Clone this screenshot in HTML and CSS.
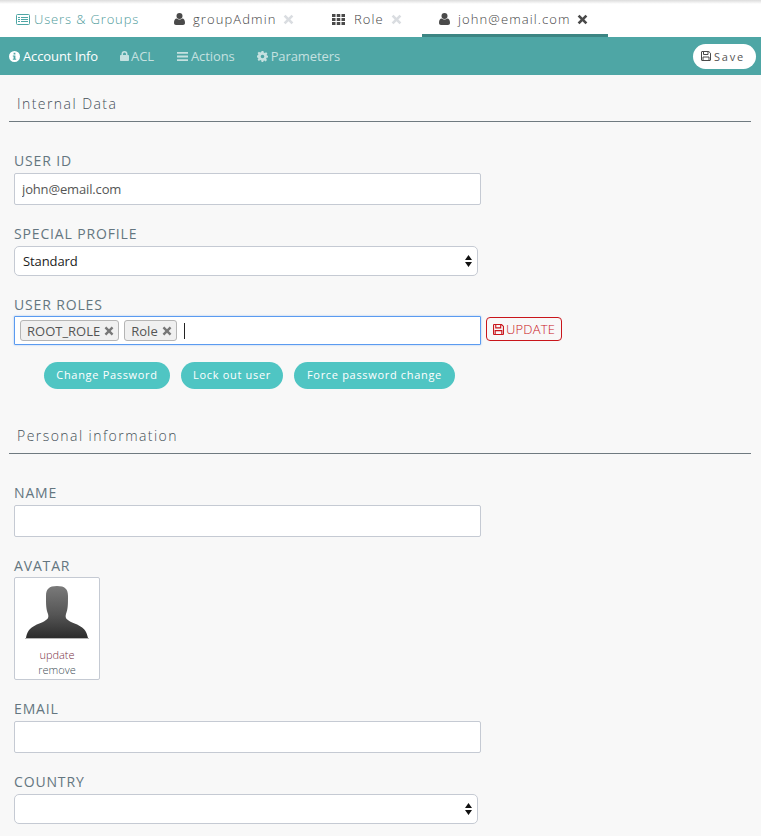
FILE: index.html
```html
<!DOCTYPE html>
<html lang="en">
<head>
    <meta charset="UTF-8">
    <meta name="viewport" content="width=device-width, initial-scale=1.0">
    <title>john@email.com</title>
    <link rel="stylesheet" href="styles.css">
</head>
<body>
    <div class="tabs">
        <a class="tab tab-home" href="#">
            <svg class="tab-icon" width="14" height="11" viewBox="0 0 14 11"><rect x="0.5" y="0.5" width="13" height="10" rx="1" fill="none" stroke="#4ea6a5"/><path d="M2 3h2v1H2zM5 3h7v1H5zM2 5h2v1H2zM5 5h7v1H5zM2 7h2v1H2zM5 7h7v1H5z" fill="#4ea6a5"/></svg>
            Users &amp; Groups
        </a>
        <a class="tab tab-group" href="#">
            <svg class="tab-icon" width="11" height="12" viewBox="0 0 11 12"><circle cx="5.5" cy="3" r="3" fill="#4a4a4a"/><path d="M0 10c0-3 1-4.500 2.800-4.500 1 .8 1.700 1 2.700 1s1.700-.2 2.700-1C10 5.500 11 7 11 10c0 1.300-.8 2-2 2H2c-1.200 0-2-.7-2-2z" fill="#4a4a4a"/></svg>
            <span class="tab-text">groupAdmin</span>
            <svg class="tab-close" width="11" height="11" viewBox="0 0 10 10"><path d="M2.300 .6 5 3.300 7.700 .6 9.400 2.300 6.700 5 9.400 7.700 7.700 9.400 5 6.700 2.300 9.400 .6 7.700 3.300 5 .6 2.300z" fill="#dadde1"/></svg>
        </a>
        <a class="tab tab-role" href="#">
            <svg class="tab-icon" width="13" height="11" viewBox="0 0 13 11"><path d="M0 0h3.500v3H0zM4.750 0h3.500v3h-3.500zM9.500 0H13v3H9.500zM0 4h3.500v3H0zM4.750 4h3.500v3h-3.500zM9.500 4H13v3H9.500zM0 8h3.500v3H0zM4.750 8h3.500v3h-3.500zM9.500 8H13v3H9.500z" fill="#4a4a4a"/></svg>
            <span class="tab-text">Role</span>
            <svg class="tab-close" width="11" height="11" viewBox="0 0 10 10"><path d="M2.300 .6 5 3.300 7.700 .6 9.400 2.300 6.700 5 9.400 7.700 7.700 9.400 5 6.700 2.300 9.400 .6 7.700 3.300 5 .6 2.300z" fill="#dadde1"/></svg>
        </a>
        <a class="tab tab-active" href="#">
            <svg class="tab-icon" width="11" height="12" viewBox="0 0 11 12"><circle cx="5.500" cy="3" r="3" fill="#4a4a4a"/><path d="M0 10c0-3 1-4.500 2.800-4.500 1 .8 1.700 1 2.700 1s1.700-.2 2.700-1C10 5.500 11 7 11 10c0 1.300-.8 2-2 2H2c-1.200 0-2-.7-2-2z" fill="#4a4a4a"/></svg>
            <span class="tab-text">john@email.com</span>
            <svg class="tab-close" width="11" height="11" viewBox="0 0 10 10"><path d="M2.300 .6 5 3.300 7.700 .6 9.400 2.300 6.700 5 9.400 7.700 7.700 9.400 5 6.700 2.300 9.400 .6 7.700 3.300 5 .6 2.300z" fill="#4a4a4a"/></svg>
        </a>
    </div>

    <div class="toolbar">
        <a class="tool tool-active" href="#">
            <svg width="11" height="11" viewBox="0 0 11 11"><path fill-rule="evenodd" d="M5.500 0a5.500 5.500 0 1 1 0 11 5.500 5.500 0 0 1 0-11zM4.600 1.800v1.600h1.800V1.800zM3.800 4.400v1h.8v2.300h-.8v1h3.400v-1h-.8V4.400z" fill="#fff"/></svg>
            Account Info
        </a>
        <a class="tool tool-acl" href="#">
            <svg width="9" height="10" viewBox="0 0 9 10"><path fill-rule="evenodd" d="M1.500 4V3a3 3 0 0 1 6 0v1H8c.6 0 1 .4 1 1v4c0 .6-.4 1-1 1H1c-.6 0-1-.4-1-1V5c0-.6.400-1 1-1zM3 4h3V3a1.500 1.500 0 0 0-3 0z" fill="#c5e1e0"/></svg>
            ACL
        </a>
        <a class="tool" href="#">
            <svg width="11" height="9" viewBox="0 0 11 9"><path d="M0 0h11v1.800H0zM0 3.600h11v1.800H0zM0 7.200h11V9H0z" fill="#c5e1e0"/></svg>
            Actions
        </a>
        <a class="tool" href="#">
            <svg width="11" height="11" viewBox="0 0 24 24"><path fill-rule="evenodd" d="M10 0h4l.7 3.300 2.300 1 2.900-1.800 2.800 2.800L21 8.100l.9 2.200L24 10v4l-3.100.7-.9 2.300 1.700 2.900-2.800 2.800-2.900-1.800-2.300.9L14 24h-4l-.7-3.200-2.300-.9-2.900 1.800-2.800-2.800L3 17l-.9-2.300L0 14v-4l2.100-.7L3 7.100 1.300 4.300l2.800-2.800L7 3.300l2.300-1zM12 8a4 4 0 1 0 0 8 4 4 0 0 0 0-8z" fill="#c5e1e0"/></svg>
            Parameters
        </a>
        <button class="save-btn" type="button">
            <svg width="10" height="10" viewBox="0 0 10 10"><path d="M.5 1c0-.3.200-.5.500-.5h6.800L9.500 2.200V9c0 .3-.2.500-.5.500H1c-.3 0-.5-.2-.5-.5zM2.500 .5v3h4.500v-3M2 9.500V6h6v3.500" fill="none" stroke="#4a4a4a"/></svg>
            Save
        </button>
    </div>

    <div class="content">
        <h3 class="section-title">Internal Data</h3>

        <div class="field field-first">
            <label>USER ID</label>
            <input class="text-input" type="text" value="john@email.com">
        </div>

        <div class="field">
            <label>SPECIAL PROFILE</label>
            <div class="select-box">
                <select><option>Standard</option></select>
                <svg class="select-arrows" width="7" height="12" viewBox="0 0 7 12"><path d="M3.500 0 7 5H0zM0 7h7l-3.500 5z" fill="#111"/></svg>
            </div>
        </div>

        <div class="field">
            <label class="label-tight">USER ROLES</label>
            <div class="roles-row">
                <div class="roles-input">
                    <span class="role-tag">ROOT_ROLE <svg width="10" height="10" viewBox="0 0 10 10"><path d="M2.300 .6 5 3.300 7.700 .6 9.400 2.300 6.700 5 9.400 7.700 7.700 9.400 5 6.700 2.300 9.400 .6 7.700 3.300 5 .6 2.300z" fill="#777"/></svg></span>
                    <span class="role-tag">Role <svg width="10" height="10" viewBox="0 0 10 10"><path d="M2.300 .6 5 3.300 7.700 .6 9.400 2.300 6.700 5 9.400 7.700 7.700 9.400 5 6.700 2.300 9.400 .6 7.700 3.300 5 .6 2.300z" fill="#777"/></svg></span>
                    <span class="caret"></span>
                </div>
                <button class="update-btn" type="button">
                    <svg width="11" height="11" viewBox="0 0 10 10"><path d="M.5 1c0-.3.200-.5.500-.5h6.800L9.500 2.200V9c0 .3-.2.500-.5.500H1c-.3 0-.5-.2-.5-.5zM2.500 .5v3h4.500v-3M2 9.500V6h6v3.500" fill="none" stroke="#c9151b"/></svg>
                    UPDATE
                </button>
            </div>
        </div>

        <div class="actions">
            <button class="pill-btn pill-change" type="button">Change Password</button>
            <button class="pill-btn pill-lock" type="button">Lock out user</button>
            <button class="pill-btn pill-force" type="button">Force password change</button>
        </div>

        <h3 class="section-title section-personal">Personal information</h3>

        <div class="field field-first">
            <label>NAME</label>
            <input class="text-input" type="text">
        </div>

        <div class="field">
            <label class="label-tight">AVATAR</label>
            <div class="avatar-box">
                <svg class="avatar-img" width="64" height="55" viewBox="0 0 64 55">
                    <defs>
                        <linearGradient id="avatar-fill" x1="0" y1="0" x2="0" y2="1">
                            <stop offset="0" stop-color="#7a7a7a"/>
                            <stop offset="0.55" stop-color="#555"/>
                            <stop offset="1" stop-color="#2c2c2c"/>
                        </linearGradient>
                    </defs>
                    <path d="M32 1c8 0 11 3 11 10 0 8 0 13-2 18-1 4 0 5 5 8 6 3 15 4 17 16H1c2-12 11-13 17-16 5-3 6-4 5-8-2-5-2-10-2-18C21 4 24 1 32 1z" fill="url(#avatar-fill)"/>
                    <path d="M0 53.500h64" stroke="#b5b5b5" stroke-width="1"/>
                </svg>
                <a class="avatar-link avatar-update" href="#">update</a>
                <a class="avatar-link" href="#">remove</a>
            </div>
        </div>

        <div class="field">
            <label>EMAIL</label>
            <input class="text-input" type="text">
        </div>

        <div class="field">
            <label>COUNTRY</label>
            <div class="select-box">
                <select><option></option></select>
                <svg class="select-arrows" width="7" height="12" viewBox="0 0 7 12"><path d="M3.500 0 7 5H0zM0 7h7l-3.500 5z" fill="#111"/></svg>
            </div>
        </div>
    </div>
</body>
</html>
```

FILE: styles.css
```css
* {
    box-sizing: border-box;
}
html, body {
    height: 836px;
    overflow: hidden;
}
body {
    margin: 0;
    font-family: 'Open Sans', sans-serif;
    color: #5f6b73;
    background-color: #f8f8f8;
}
a {
    text-decoration: none;
}

/* tabs */
.tabs {
    display: flex;
    height: 37px;
    background: linear-gradient(#dcdcdc, #fff 4px);
    font-size: 13px;
    font-weight: 300;
    letter-spacing: 1.1px;
}
.tab {
    display: flex;
    align-items: center;
    gap: 7px;
    height: 37px;
    padding-top: 1px;
    color: #444;
    white-space: nowrap;
}
.tab-icon {
    flex: none;
}
.tab-home {
    width: 157px;
    padding-left: 16px;
    gap: 4px;
    color: #4e9a9a;
    letter-spacing: 0.85px;
}
.tab-group {
    width: 158px;
    padding-left: 17px;
}
.tab-group .tab-text {
    margin-left: 1px;
    margin-right: -1px;
}
.tab-role {
    width: 107px;
    padding-left: 17px;
    gap: 8px;
}
.tab-role .tab-text {
    margin-left: 1px;
    margin-right: -1px;
}
.tab-active {
    width: 186px;
    padding-left: 17px;
    gap: 6px;
    border-bottom: 3px solid #3c8583;
    padding-top: 4px;
}
.tab-active .tab-text {
    margin-left: 2px;
}

/* toolbar */
.toolbar {
    display: flex;
    align-items: center;
    height: 38px;
    padding: 0 5px 0 9px;
    background-color: #4ea6a5;
    font-size: 13px;
}
.tool {
    display: flex;
    align-items: center;
    gap: 3px;
    margin-right: 22px;
    color: #c5e1e0;
    letter-spacing: -0.1px;
}
.tool-active {
    color: #fff;
}
.tool-acl {
    gap: 2px;
    margin-right: 23px;
}
.save-btn {
    display: flex;
    align-items: center;
    gap: 3px;
    width: 63px;
    height: 25px;
    margin-left: auto;
    padding: 0 0 0 8px;
    border: none;
    border-radius: 13px;
    background: #fff;
    color: #555;
    font-family: inherit;
    font-size: 11px;
    letter-spacing: 1.8px;
}

/* form */
.content {
    padding: 0 10px 0 9px;
}
.section-title {
    height: 47px;
    margin: 0;
    padding: 18px 0 0 8px;
    border-bottom: 1px solid #6f7a80;
    font-size: 14px;
    font-weight: 300;
    line-height: 22px;
    letter-spacing: 1.45px;
    color: #444f57;
}
.section-personal {
    margin-top: 17px;
    height: 48px;
    padding-top: 19px;
}
.field {
    margin: 0 0 0 5px;
    padding-top: 19px;
}
.field-first {
    padding-top: 29px;
}
.field label {
    display: block;
    height: 22px;
    font-size: 14px;
    line-height: 20px;
    letter-spacing: 0.85px;
    color: #647680;
}
.field .label-tight {
    height: 21px;
}
.text-input {
    display: block;
    width: 467px;
    height: 32px;
    padding: 0 7px;
    border: 1px solid #c5cad3;
    border-radius: 2px;
    background: #fff;
    font-family: inherit;
    font-size: 13px;
    letter-spacing: -0.15px;
    color: #555;
}
.select-box {
    position: relative;
    width: 464px;
    height: 30px;
}
.select-box select {
    display: block;
    width: 100%;
    height: 100%;
    padding: 0 8px;
    border: 1px solid #c5cad3;
    border-radius: 5px;
    background: #fff;
    appearance: none;
    font-family: inherit;
    font-size: 13px;
    letter-spacing: -0.1px;
    color: #222;
}
.select-arrows {
    position: absolute;
    top: 9px;
    right: 6px;
}

/* roles */
.roles-row {
    display: flex;
    align-items: flex-start;
    gap: 5px;
}
.roles-input {
    display: flex;
    align-items: center;
    gap: 5px;
    width: 467px;
    height: 29px;
    padding: 0 5px;
    border: 1px solid #5b9bf0;
    border-radius: 1px;
    background: #fff;
    box-shadow: 0 0 2px rgba(91, 155, 240, 0.6);
}
.role-tag {
    display: flex;
    align-items: center;
    gap: 4px;
    height: 21px;
    padding: 0 4px 0 6px;
    border: 1px solid #b5b5b5;
    border-radius: 3px;
    background: #f0f0f0;
    font-size: 13px;
    color: #555;
}
.caret {
    width: 1px;
    height: 16px;
    margin-left: 2px;
    background: #222;
}
.update-btn {
    display: flex;
    align-items: center;
    gap: 2px;
    width: 76px;
    height: 24px;
    margin-top: 1px;
    padding: 0 0 0 6px;
    border: 1px solid #c9151b;
    border-radius: 4px;
    background: #f8f8f8;
    font-family: inherit;
    font-size: 13px;
    font-weight: 300;
    letter-spacing: 0.2px;
    color: #c9151b;
}
.actions {
    display: flex;
    gap: 11px;
    margin: 17px 0 0 35px;
}
.pill-btn {
    height: 27px;
    padding: 0 0 2px;
    border: none;
    border-radius: 14px;
    background: #4fc5c3;
    color: #fff;
    font-family: inherit;
    font-size: 11px;
    letter-spacing: 0.68px;
}
.pill-change {
    width: 126px;
}
.pill-lock {
    width: 102px;
}
.pill-force {
    width: 161px;
}

/* avatar */
.avatar-box {
    display: flex;
    flex-direction: column;
    align-items: center;
    width: 86px;
    height: 103px;
    padding-top: 7px;
    border: 1px solid #c5cad3;
    border-radius: 2px;
    background: #fff;
}
.avatar-img {
    flex: none;
    margin-bottom: 7px;
}
.avatar-link {
    font-size: 11px;
    line-height: 15px;
    font-weight: 300;
    color: #444f57;
}
.avatar-update {
    color: #7a2f45;
}
```
